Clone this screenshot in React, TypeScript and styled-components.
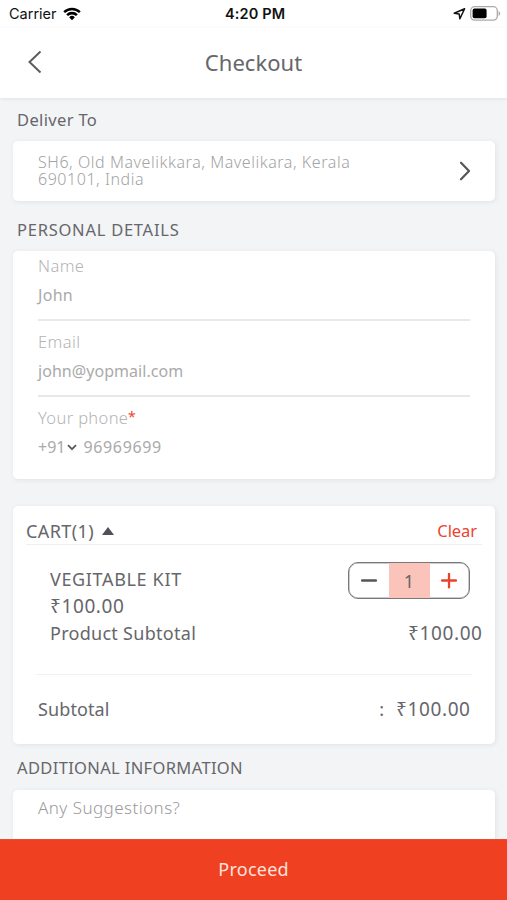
import React from "react";
import styled, { createGlobalStyle } from "styled-components";

const GlobalStyle = createGlobalStyle`
  * { box-sizing: border-box; }
  body { margin: 0; background: #f3f4f6; }
  button { padding: 0; border: 0; background: none; display: flex; }
`;

const Screen = styled.div`
  display: flex;
  flex-direction: column;
  width: 507px;
  height: 900px;
  overflow: hidden;
  background: #f3f4f6;
  font-family: "Noto Sans", sans-serif;
  color: #66666b;
`;

const Label = styled.span<{ $size: number; $spacing?: number; $color?: string; $weight?: number; $line?: number }>`
  display: block;
  white-space: nowrap;
  margin: 0 ${(p) => -(p.$spacing ?? 0)}px 0 0;
  font-size: ${(p) => p.$size}px;
  letter-spacing: ${(p) => p.$spacing ?? 0}px;
  line-height: ${(p) => p.$line ?? 20}px;
  font-weight: ${(p) => p.$weight ?? 400};
  color: ${(p) => p.$color ?? "inherit"};
`;

const StatusBar = styled.div`
  display: grid;
  grid-template-columns: 1fr auto 1fr;
  align-items: center;
  flex: none;
  height: 28px;
  padding: 0 6px 0 9px;
  background: #fff;
  color: #111;
  font-family: Inter, sans-serif;
`;

const StatusGroup = styled.div<{ $end?: boolean }>`
  display: flex;
  align-items: center;
  gap: ${(p) => (p.$end ? 4 : 6)}px;
  justify-content: ${(p) => (p.$end ? "flex-end" : "flex-start")};
  padding-bottom: ${(p) => (p.$end ? 2 : 1)}px;
`;

const Header = styled.header`
  display: grid;
  grid-template-columns: 60px 1fr 60px;
  align-items: center;
  justify-items: center;
  flex: none;
  height: 70px;
  padding: 0 0 2px;
  background: #fff;
  box-shadow: 0 1px 4px rgba(0, 0, 0, 0.07);
  z-index: 1;
`;

const BackButton = styled.button`
  padding-left: 9px;
`;

const Content = styled.main`
  flex: 1;
  min-height: 0;
  overflow: hidden;
  padding: 0 12px 0 13px;
`;

const SectionTitle = styled.h2<{ $height: number; $top: number; $spacing: number }>`
  margin: 0;
  height: ${(p) => p.$height}px;
  padding: ${(p) => p.$top}px 0 0 4px;
  font-size: 16.5px;
  font-weight: 400;
  line-height: 20px;
  letter-spacing: ${(p) => p.$spacing}px;
  white-space: nowrap;
`;

const Card = styled.section<{ $height: number }>`
  height: ${(p) => p.$height}px;
  border-radius: 5px;
  background: #fff;
  box-shadow: 1px 1px 5px rgba(50, 60, 60, 0.09);
`;

const AddressCard = styled(Card)`
  display: flex;
  align-items: center;
  justify-content: space-between;
  padding: 0 24px 0 25px;
`;

const Address = styled.p`
  width: 330px;
  margin: 0;
  font-size: 16px;
  font-weight: 300;
  line-height: 17.5px;
  letter-spacing: 0.55px;
  color: #a3a3a4;
`;

const FormCard = styled(Card)`
  padding: 0 25px;
`;

const Field = styled.div`
  height: 76px;
  padding-top: 5px;
`;

const FieldLabel = styled.div`
  display: flex;
  height: 29px;
`;

const FieldRule = styled.hr`
  height: 2px;
  margin: 14px 0 0;
  border: 0;
  background: #e8e8e9;
`;

const PhoneRow = styled.div`
  display: flex;
  align-items: center;
  height: 20px;
  gap: 6px;
`;

const CountryCode = styled.div`
  display: flex;
  align-items: center;
  gap: 2px;
`;

const CartCard = styled(Card)`
  margin-top: 27px;
`;

const CartHeader = styled.div`
  display: flex;
  align-items: center;
  justify-content: space-between;
  height: 39px;
  margin: 0 13px;
  padding: 12px 5px 0 0;
  border-bottom: 1px solid #f0f0f1;
`;

const CartToggle = styled.div`
  display: flex;
  align-items: center;
  gap: 8px;
`;

const ProductRow = styled.div`
  display: flex;
  justify-content: space-between;
  height: 78px;
  padding: 17px 25px 0 37px;
`;

const ProductInfo = styled.div`
  display: flex;
  flex-direction: column;
  padding-top: 4px;
`;

const Stepper = styled.div`
  display: grid;
  grid-template-columns: 1fr 41px 1fr;
  width: 122px;
  height: 37px;
  border: 1px solid #77777c;
  box-shadow: inset 0 0 0 0.5px #99999d;
  border-radius: 10px;
  overflow: hidden;
  & > * { display: flex; align-items: center; justify-content: center; }
`;

const Quantity = styled.div`
  background: #fac4bb;
`;

const ProductSubtotal = styled.div`
  display: flex;
  justify-content: space-between;
  height: 51px;
  padding: 0 13px 0 37px;
`;

const SubtotalRow = styled.div`
  display: flex;
  justify-content: space-between;
  margin: 0 23px;
  padding: 24px 2px 0;
  border-top: 1px solid #f1f1f2;
`;

const Amount = styled.div`
  display: flex;
  gap: 12px;
`;

const SuggestionCard = styled(Card)`
  padding: 8px 25px;
`;

const ProceedButton = styled.button`
  flex: none;
  width: 100%;
  height: 61px;
  padding-bottom: 2px;
  align-items: center;
  justify-content: center;
  background: #f04022;
  border-top: 1px solid #e94a30;
  font-family: inherit;
`;

const WifiIcon = () => (
  <svg width="18" height="14" viewBox="0 0 18 14">
    <path d="M.3 4.200a12.500 12.500 0 0 1 17.400 0l-1.700 1.800a10 10 0 0 0-14 0z" fill="#000" />
    <path d="M3.200 7.200a8.300 8.300 0 0 1 11.600 0l-1.800 1.800a5.800 5.800 0 0 0-8 0z" fill="#000" />
    <path d="M6.200 10.200a4 4 0 0 1 5.600 0L9 13.200z" fill="#000" />
  </svg>
);

const LocationIcon = () => (
  <svg width="13" height="13" viewBox="0 0 13 13">
    <path d="M11.600 1.800 1.200 6.200l5 .8.700 4.800z" fill="none" stroke="#111" strokeWidth="1.500" strokeLinejoin="round" />
  </svg>
);

const BatteryIcon = () => (
  <svg width="31" height="15" viewBox="0 0 31 15">
    <rect x=".7" y=".7" width="26.6" height="13.4" rx="4" fill="none" stroke="#aaa" strokeWidth="1.3" />
    <rect x="2.6" y="2.6" width="14" height="9.6" rx="1.8" fill="#000" />
    <path d="M28.600 5v5c2-.8 2-4.200 0-5z" fill="#aaa" />
  </svg>
);

const BackIcon = () => (
  <svg width="14" height="24" viewBox="0 0 14 24">
    <path d="M12.500 1.500 1.500 12l11 10.500" fill="none" stroke="#5c5c62" strokeWidth="2" />
  </svg>
);

const ForwardIcon = () => (
  <svg width="12" height="20" viewBox="0 0 12 20">
    <path d="m2 1.700 8 8.300-8 8.300" fill="none" stroke="#55555a" strokeWidth="2.200" strokeLinecap="round" strokeLinejoin="round" />
  </svg>
);

const DownIcon = () => (
  <svg width="10" height="7" viewBox="0 0 10 7">
    <path d="m1 1.200 4 4 4-4" fill="none" stroke="#5c5c60" strokeWidth="1.800" />
  </svg>
);

const UpIcon = () => (
  <svg width="12" height="8" viewBox="0 0 12 8">
    <path d="M6 0 12 8H0z" fill="#505056" />
  </svg>
);

const StepIcon = ({ plus }: { plus?: boolean }) => (
  <svg width="16" height="16" viewBox="0 0 16 16">
    <path d={plus ? "M1 7.500h14M8 .8v13.600" : "M1 7.500h14"} stroke={plus ? "#ea432c" : "#55555b"} strokeWidth="2.300" strokeLinecap="round" />
  </svg>
);

export default function App() {
  return (
    <Screen>
      <GlobalStyle />
      <StatusBar>
        <StatusGroup>
          <Label $size={14.5}>Carrier</Label>
          <WifiIcon />
        </StatusGroup>
        <Label $size={14.5} $weight={600} $spacing={0.15}>4:20 PM</Label>
        <StatusGroup $end>
          <LocationIcon />
          <BatteryIcon />
        </StatusGroup>
      </StatusBar>
      <Header>
        <BackButton aria-label="Back"><BackIcon /></BackButton>
        <Label as="h1" $size={22} $spacing={0.05} $line={28}>Checkout</Label>
      </Header>
      <Content>
        <SectionTitle $height={43} $top={12} $spacing={0.35}>Deliver To</SectionTitle>
        <AddressCard $height={60}>
          <Address>SH6, Old Mavelikkara, Mavelikara, Kerala 690101, India</Address>
          <ForwardIcon />
        </AddressCard>
        <SectionTitle $height={50} $top={19} $spacing={0.75}>PERSONAL DETAILS</SectionTitle>
        <FormCard $height={228}>
          <Field>
            <FieldLabel><Label $size={16.5} $weight={300} $spacing={0.4} $color="#b4b4b4">Name</Label></FieldLabel>
            <Label $size={16} $spacing={0.3} $color="#aaa">John</Label>
            <FieldRule />
          </Field>
          <Field>
            <FieldLabel><Label $size={16.5} $weight={300} $spacing={0.4} $color="#b4b4b4">Email</Label></FieldLabel>
            <Label $size={16} $spacing={0.05} $color="#aaa">john@yopmail.com</Label>
            <FieldRule />
          </Field>
          <Field>
            <FieldLabel>
              <Label $size={16.5} $weight={300} $spacing={0.35} $color="#b4b4b4">Your phone</Label>
              <Label $size={14} $color="#ef4432" $line={18}>*</Label>
            </FieldLabel>
            <PhoneRow>
              <CountryCode>
                <Label $size={16} $color="#aaa">+91</Label>
                <DownIcon />
              </CountryCode>
              <Label $size={16} $spacing={0.65} $color="#aaa">96969699</Label>
            </PhoneRow>
          </Field>
        </FormCard>
        <CartCard $height={238}>
          <CartHeader>
            <CartToggle>
              <Label $size={18} $spacing={0.4}>CART(1)</Label>
              <UpIcon />
            </CartToggle>
            <Label $size={16.5} $spacing={-0.1} $line={22} $color="#eb442d">Clear</Label>
          </CartHeader>
          <ProductRow>
            <ProductInfo>
              <Label $size={18} $spacing={0.65} $line={27}>VEGITABLE KIT</Label>
              <Label $size={19} $spacing={0.6} $line={27}>₹100.00</Label>
            </ProductInfo>
            <Stepper>
              <button aria-label="Decrease"><StepIcon /></button>
              <Quantity><Label $size={18}>1</Label></Quantity>
              <button aria-label="Increase"><StepIcon plus /></button>
            </Stepper>
          </ProductRow>
          <ProductSubtotal>
            <Label $size={18} $spacing={0.28}>Product Subtotal</Label>
            <Label $size={19} $spacing={0.6}>₹100.00</Label>
          </ProductSubtotal>
          <SubtotalRow>
            <Label $size={18} $spacing={0.1}>Subtotal</Label>
            <Amount>
              <Label $size={18}>:</Label>
              <Label $size={19} $spacing={0.6}>₹100.00</Label>
            </Amount>
          </SubtotalRow>
        </CartCard>
        <SectionTitle $height={46} $top={14} $spacing={0.35}>ADDITIONAL INFORMATION</SectionTitle>
        <SuggestionCard $height={100}>
          <Label $size={17} $spacing={0.45} $color="#9a9a9c" $weight={300}>Any Suggestions?</Label>
        </SuggestionCard>
      </Content>
      <ProceedButton>
        <Label $size={18} $spacing={0.25} $color="#ffe3dc">Proceed</Label>
      </ProceedButton>
    </Screen>
  );
}
